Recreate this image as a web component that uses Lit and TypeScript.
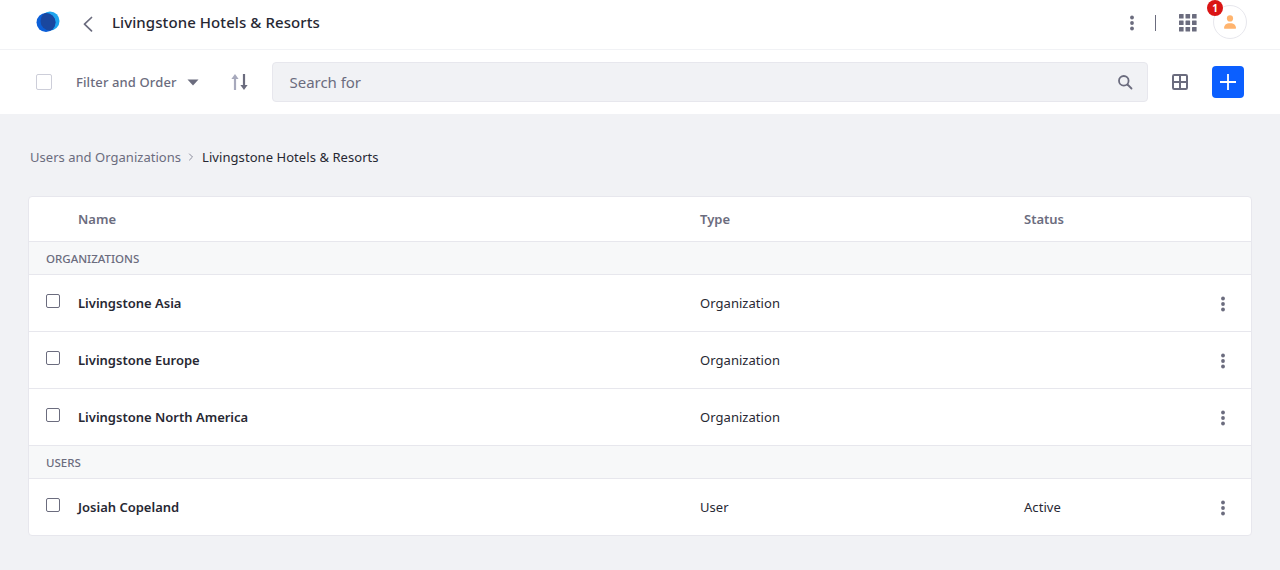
import { LitElement, html, css, svg } from "lit";
import { customElement } from "lit/decorators.js";

const dots = html`<svg class="dots" width="4" height="16" viewBox="0 0 4 16"><circle cx="2" cy="2.5" r="1.9"/><circle cx="2" cy="8" r="1.9"/><circle cx="2" cy="13.5" r="1.9"/></svg>`;

const gridDots = [0, 6.5, 13].flatMap((y) =>
  [0, 6.5, 13].map((x) => svg`<rect x=${x} y=${y} width="4.6" height="4.6" rx=".5"/>`)
);

type Row = { kind: "group"; label: string } | { kind: "row"; name: string; type: string; status?: string };

const rows: Row[] = [
  { kind: "group", label: "ORGANIZATIONS" },
  { kind: "row", name: "Livingstone Asia", type: "Organization" },
  { kind: "row", name: "Livingstone Europe", type: "Organization" },
  { kind: "row", name: "Livingstone North America", type: "Organization" },
  { kind: "group", label: "USERS" },
  { kind: "row", name: "Josiah Copeland", type: "User", status: "Active" },
];

@customElement("app-root")
export class AppRoot extends LitElement {
  static styles = css`
    :host {
      display: block;
      width: 1280px;
      height: 570px;
      overflow: hidden;
      background: #f1f2f5;
      font-family: "Noto Sans", "Open Sans", sans-serif;
      color: #272833;
      font-size: 14px;
    }
    * { box-sizing: border-box; }
    .topbar {
      height: 50px;
      background: #fff;
      border-bottom: 1px solid #f1f2f5;
      display: flex;
      align-items: center;
      padding: 0 33px 5px 36px;
    }
    .logo { display: block; margin-right: 22px; }
    .back { display: block; margin: 3px 18px 0 0; }
    .title { font-size: 15px; font-weight: 500; color: #272833; flex: 1; letter-spacing: 0.08px; }
    .top-actions { display: flex; align-items: center; }
    .top-actions .dots { margin-top: 2px; }
    .dots { fill: #6b6c7e; display: block; }
    .sep { width: 1px; height: 16px; background: #6b6c7e; margin: 1px 23px 0 21px; }
    .apps { fill: #6b6c7e; display: block; margin: 1px 16px 0 0; }
    .avatar {
      position: relative;
      width: 34px;
      height: 34px;
      border: 1px solid #e7e7ed;
      border-radius: 50%;
      display: flex;
      align-items: center;
      justify-content: center;
    }
    .badge {
      position: absolute;
      left: -7px;
      top: -6px;
      width: 16px;
      height: 16px;
      border-radius: 50%;
      background: #da1414;
      color: #fff;
      font-size: 10px;
      font-weight: 700;
      line-height: 16px;
      text-align: center;
    }
    .toolbar {
      height: 65px;
      background: #fff;
      border-bottom: 1px solid #f1f2f5;
      display: flex;
      align-items: center;
      padding: 0 36px;
    }
    .tcheck {
      width: 16px;
      height: 16px;
      border: 1px solid #cdced9;
      border-radius: 2px;
      background: #fff;
      margin-right: 24px;
    }
    .filter {
      font-size: 13px;
      font-weight: 500;
      letter-spacing: 0.12px;
      color: #6b6c7e;
      display: flex;
      align-items: center;
      margin-right: 32px;
    }
    .caret { display: block; margin-left: 10px; fill: #6b6c7e; }
    .sort { display: block; margin-right: 23px; }
    .search {
      width: 876px;
      height: 40px;
      background: #f1f2f5;
      border: 1px solid #e7e7ed;
      border-radius: 4px;
      display: flex;
      align-items: center;
      justify-content: space-between;
      padding: 0 14px 0 17px;
      color: #6b6c7e;
      font-size: 15px;
      letter-spacing: -0.05px;
      margin-right: 24px;
    }
    .table-ic { display: block; margin-right: 24px; }
    .add {
      width: 32px;
      height: 32px;
      border-radius: 4px;
      background: #0b5fff;
      display: flex;
      align-items: center;
      justify-content: center;
    }
    .crumbs {
      display: flex;
      align-items: center;
      padding: 3px 30px 0;
      height: 81px;
      font-size: 13px;
      color: #6b6c7e;
      letter-spacing: 0.03px;
    }
    .crumbs svg { display: block; margin: 0 8px 0 7px; }
    .crumbs .cur { color: #272833; letter-spacing: 0.06px; }
    .card {
      margin: 0 28px;
      width: 1224px;
      background: #fff;
      border: 1px solid #e7e7ed;
      border-radius: 4px;
      overflow: hidden;
    }
    .line {
      display: grid;
      grid-template-columns: 49px 622px 324px 1fr 40px;
      align-items: center;
      font-size: 13px;
    }
    .head {
      height: 45px;
      font-weight: 600;
      color: #6b6c7e;
      border-bottom: 1px solid #e7e7ed;
    }
    .group {
      height: 33px;
      background: #f7f8f9;
      border-bottom: 1px solid #e7e7ed;
      padding-left: 17px;
      display: flex;
      align-items: center;
      font-size: 11.5px;
      font-weight: 500;
      color: #6b6c7e;
    }
    .row { height: 57px; border-bottom: 1px solid #e7e7ed; }
    .row.last { height: 56px; border-bottom: 0; }
    .box {
      width: 14px;
      height: 14px;
      margin: -4px 0 0 17px;
      border: 1px solid #6b6c7e;
      border-radius: 2px;
      background: #fff;
    }
    .name { font-weight: 600; color: #272833; }
    .cell { letter-spacing: 0.05px; }
    .row .dots { margin: 2px 0 0 10px; }
  `;

  render() {
    return html`
      <div class="topbar">
        <svg class="logo" width="24" height="22" viewBox="0 0 24 22">
          <defs><clipPath id="logo-clip"><circle cx="14" cy="10" r="9.500"/></clipPath></defs>
          <circle cx="14" cy="10" r="9.500" fill="#1ea4ee"/>
          <circle cx="10" cy="11.500" r="9.500" fill="#0b5fd8"/>
          <circle cx="10" cy="11.500" r="9.500" fill="#1a479f" clip-path="url(#logo-clip)"/>
        </svg>
        <svg class="back" width="12" height="16" viewBox="0 0 12 16" fill="none" stroke="#6b6c7e" stroke-width="1.7" stroke-linecap="round" stroke-linejoin="round">
          <path d="M9.5 1.5 2.5 8.2 9.5 14.8"/>
        </svg>
        <div class="title">Livingstone Hotels &amp; Resorts</div>
        <div class="top-actions">
          ${dots}
          <div class="sep"></div>
          <svg class="apps" width="18" height="18" viewBox="0 0 18 18">${gridDots}</svg>
          <div class="avatar">
            <span class="badge">1</span>
            <svg width="14" height="14" viewBox="0 0 14 14" fill="#ffb46e">
              <circle cx="7" cy="3.4" r="3.1"/>
              <path d="M1 13.5c0-3.4 2-5.3 6-5.3s6 1.900 6 5.300c-1.500.4-10.500.4-12 0z"/>
            </svg>
          </div>
        </div>
      </div>
      <div class="toolbar">
        <div class="tcheck"></div>
        <div class="filter">
          Filter and Order
          <svg class="caret" width="12" height="7" viewBox="0 0 12 7"><path d="M.5.500h11L6 6.500z"/></svg>
        </div>
        <svg class="sort" width="18" height="18" viewBox="0 0 18 18">
          <path d="M2.900 5h2.200v12H2.900z" fill="#a7a9bc"/>
          <path d="M.4 6 4 1l3.600 5z" fill="#a7a9bc"/>
          <path d="M11.900 1h2.200v12h-2.200z" fill="#6b6c7e"/>
          <path d="M9.400 12 13 17l3.600-5z" fill="#6b6c7e"/>
        </svg>
        <div class="search">
          <span>Search for</span>
          <svg width="16" height="16" viewBox="0 0 16 16" fill="none" stroke="#6b6c7e" stroke-width="1.800" stroke-linecap="round">
            <circle cx="6.800" cy="6.800" r="4.800"/><path d="M10.500 10.500 14.500 14.500"/>
          </svg>
        </div>
        <svg class="table-ic" width="16" height="16" viewBox="0 0 16 16" fill="none" stroke="#6b6c7e" stroke-width="2">
          <rect x="1" y="1" width="14" height="14" rx="1.200"/><path d="M8 1v14M1 8h14"/>
        </svg>
        <div class="add">
          <svg width="16" height="16" viewBox="0 0 16 16" stroke="#fff" stroke-width="1.800"><path d="M8 0v16M0 8h16"/></svg>
        </div>
      </div>
      <div class="crumbs">
        <span>Users and Organizations</span>
        <svg width="6" height="8" viewBox="0 0 6 8" fill="none" stroke="#8b8c9c" stroke-width="1"><path d="M1.200.700 4.500 4 1.200 7.300"/></svg>
        <span class="cur">Livingstone Hotels &amp; Resorts</span>
      </div>
      <div class="card">
        <div class="line head"><span></span><span>Name</span><span>Type</span><span>Status</span><span></span></div>
        ${rows.map((r, i) =>
          r.kind === "group"
            ? html`<div class="group">${r.label}</div>`
            : html`<div class="line row ${i === rows.length - 1 ? "last" : ""}">
                <div class="box"></div>
                <span class="name">${r.name}</span>
                <span class="cell">${r.type}</span>
                <span class="cell">${r.status ?? ""}</span>
                ${dots}
              </div>`
        )}
      </div>
    `;
  }
}
